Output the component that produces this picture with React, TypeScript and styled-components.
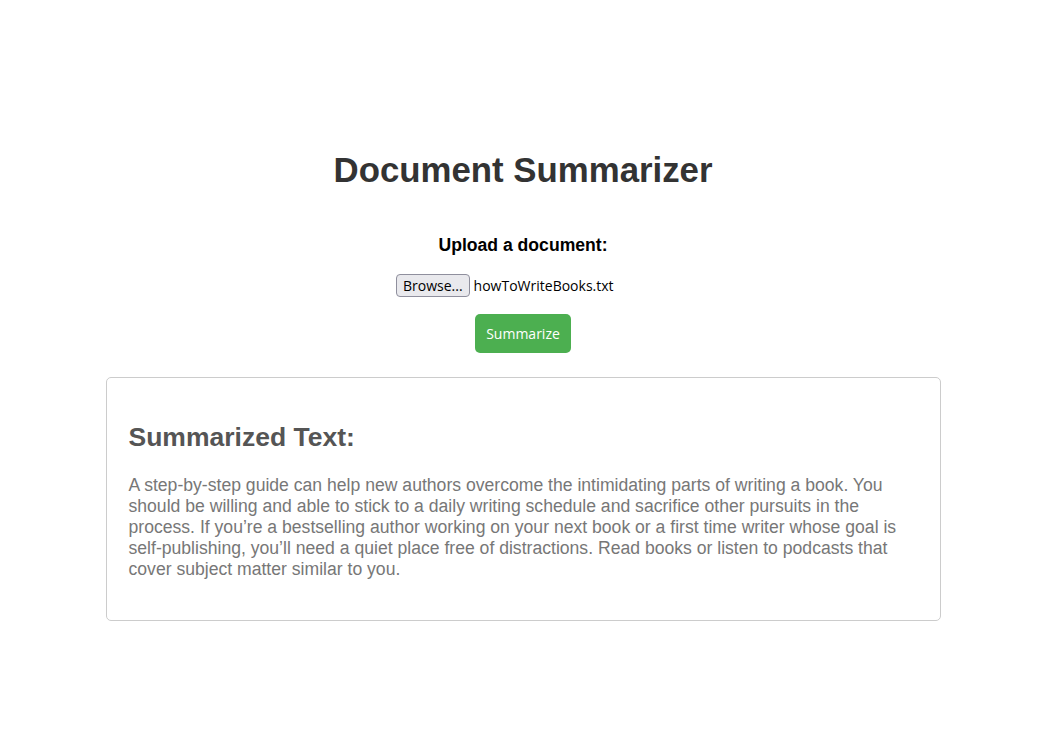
import * as React from 'react';
import styled, { createGlobalStyle } from 'styled-components';

const GlobalStyle = createGlobalStyle`
  html, body {
    margin: 0;
    padding: 0;
    background: #fff;
  }
  body {
    font-family: "Liberation Sans", Arial, sans-serif;
  }
`;

const Page = styled.main`
  display: flex;
  flex-direction: column;
  align-items: center;
  padding: 150px 0 0 2px;
`;

const Title = styled.h1`
  margin: 0;
  font-size: 34.8px;
  line-height: 40px;
  font-weight: bold;
  color: #333;
`;

const UploadForm = styled.form`
  display: flex;
  flex-direction: column;
  align-items: center;
  margin-top: 45px;
`;

const Label = styled.label`
  font-size: 17.6px;
  line-height: 21px;
  font-weight: bold;
  color: #000;
`;

const FileRow = styled.div`
  display: flex;
  align-items: center;
  gap: 4px;
  width: 254px;
  margin-top: 18px;
  height: 23px;
  font-family: "Open Sans", sans-serif;
  font-size: 14px;
  color: #000;
`;

const BrowseButton = styled.span`
  box-sizing: border-box;
  display: inline-flex;
  align-items: center;
  justify-content: center;
  height: 23px;
  padding: 0 6px;
  background: #e9e9ed;
  border: 1px solid #8f8f9d;
  border-radius: 4px;
  font-size: 14px;
`;

const FileName = styled.span`
  line-height: 19px;
  white-space: nowrap;
`;

const SubmitButton = styled.button`
  box-sizing: border-box;
  height: 39px;
  margin-top: 17px;
  padding: 0 11px;
  border: none;
  border-radius: 5px;
  background: #4caf50;
  color: #fff;
  font-family: "Open Sans", sans-serif;
  font-size: 14px;
  line-height: 19px;
  cursor: pointer;
`;

const ResultCard = styled.section`
  box-sizing: border-box;
  width: 835px;
  margin-top: 24px;
  padding: 0 22px;
  border: 1px solid #ccc;
  border-radius: 5px;
  text-align: left;
`;

const ResultHeading = styled.h2`
  margin: 44px 0 23px;
  font-size: 26.5px;
  line-height: 30px;
  font-weight: bold;
  color: #555;
`;

const ResultText = styled.p`
  margin: 0 0 40px;
  font-size: 17.6px;
  line-height: 21px;
  color: #777;
`;

const summary =
  'A step-by-step guide can help new authors overcome the intimidating parts of writing a book. You should be willing and able to stick to a daily writing schedule and sacrifice other pursuits in the process. If you\u2019re a bestselling author working on your next book or a first time writer whose goal is self-publishing, you\u2019ll need a quiet place free of distractions. Read books or listen to podcasts that cover subject matter similar to you.';

const App = () => (
  <>
    <GlobalStyle />
    <Page>
      <Title>Document Summarizer</Title>
      <UploadForm onSubmit={(e) => e.preventDefault()}>
        <Label htmlFor="doc">Upload a document:</Label>
        <FileRow>
          <BrowseButton id="doc">Browse...</BrowseButton>
          <FileName>howToWriteBooks.txt</FileName>
        </FileRow>
        <SubmitButton type="submit">Summarize</SubmitButton>
      </UploadForm>
      <ResultCard>
        <ResultHeading>Summarized Text:</ResultHeading>
        <ResultText>{summary}</ResultText>
      </ResultCard>
    </Page>
  </>
);

export default App;
